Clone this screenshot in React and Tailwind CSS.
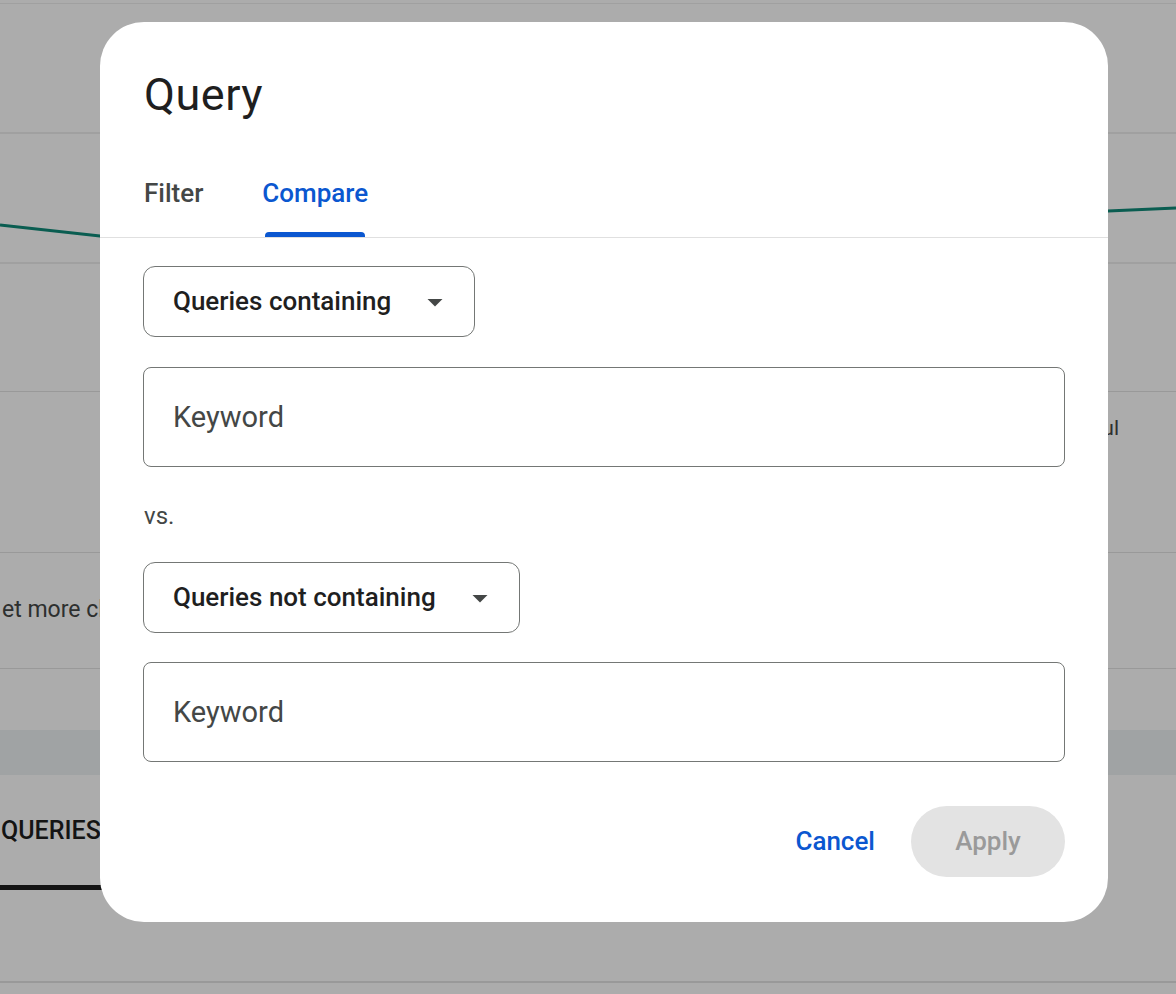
import { useState } from "react";

function Caret() {
  return (
    <svg viewBox="0 0 24 24" className="h-[36px] w-[36px] shrink-0 fill-[#444746]">
      <path d="M7 10l5 5 5-5z" />
    </svg>
  );
}

function SelectField({ label }) {
  return (
    <button className="flex h-[71px] w-fit items-center gap-[26px] rounded-[12px] border border-[#747775] pl-[29px] pr-[21px] text-[26px] font-medium text-[#1f1f1f]">
      <span>{label}</span>
      <Caret />
    </button>
  );
}

function KeywordInput() {
  return (
    <input
      placeholder="Keyword"
      className="h-[100px] w-full rounded-[8px] border border-[#747775] px-[29px] text-[29px] text-[#1f1f1f] outline-none placeholder:text-[#444746]"
    />
  );
}

function PageBehind() {
  return (
    <div className="flex flex-col text-[#444746]">
      <div className="h-[4px] border-b border-[#eeeeee]" />
      {/* performance chart */}
      <div className="h-[387px]">
        <svg viewBox="0 0 1176 387" preserveAspectRatio="none" className="h-full w-full">
          <line x1="0" y1="129" x2="1176" y2="129" stroke="#eeeeee" strokeWidth="2" />
          <line x1="0" y1="259" x2="1176" y2="259" stroke="#eeeeee" strokeWidth="2" />
          <polyline
            points="0,221 100,232 300,244 500,229 700,239 900,219 1108,207 1176,204"
            fill="none"
            stroke="#0f8a78"
            strokeWidth="3"
          />
        </svg>
      </div>
      <div className="flex h-[161px] justify-end border-t border-[#e3e3e3] pr-[57px] pt-[21px] text-[21px]">
        Helpful
      </div>
      <div className="flex h-[116px] items-center border-t border-[#e3e3e3] pl-[2px] text-[23px]">
        <span className="whitespace-nowrap">et more clicks</span>
      </div>
      <div className="h-[62px] border-t border-[#e3e3e3]" />
      <div className="h-[45px] bg-[#eef2f4]" />
      <div className="flex h-[115px] items-end">
        <div className="flex w-[112px] flex-col">
          <span className="pl-[1px] text-[25px] font-medium text-[#1f1f1f]">QUERIES</span>
          <div className="mt-[36px] h-[5px] bg-[#1f1f1f]" />
        </div>
      </div>
      <div className="h-[93px] border-b-2 border-[#e3e3e3]" />
    </div>
  );
}

export default function App() {
  const [tab, setTab] = useState("compare");

  return (
    <div className="relative h-[994px] w-[1176px] overflow-hidden bg-white font-['Roboto',sans-serif]">
      <PageBehind />
      <div className="absolute inset-0 bg-black/[0.325]" />

      <div className="absolute left-[100px] top-[22px] flex h-[900px] w-[1008px] flex-col rounded-[44px] bg-white">
        <h2 className="px-[44px] pt-[47px] text-[45px] leading-[52px] tracking-[0.5px] text-[#1f1f1f]">Query</h2>

        <div className="mt-[56px] flex gap-[59px] border-b border-[#e0e0e0] px-[44px]">
          {[
            ["filter", "Filter"],
            ["compare", "Compare"],
          ].map(([key, label]) => (
            <button key={key} onClick={() => setTab(key)} className="flex flex-col">
              <span
                className={`text-[26px] font-medium leading-[32px] ${
                  tab === key ? "text-[#0b57d0]" : "text-[#444746]"
                }`}
              >
                {label}
              </span>
              <span
                className={`mx-[3px] mt-[23px] h-[5px] rounded-t-[4px] ${
                  tab === key ? "bg-[#0b57d0]" : "bg-transparent"
                }`}
              />
            </button>
          ))}
        </div>

        <div className="flex flex-col px-[43px]">
          <div className="mt-[28px]">
            <SelectField label="Queries containing" />
          </div>
          <div className="mt-[30px]">
            <KeywordInput />
          </div>
          <p className="mt-[33px] pl-[1px] text-[24px] leading-[32px] text-[#444746]">vs.</p>
          <div className="mt-[30px]">
            <SelectField label="Queries not containing" />
          </div>
          <div className="mt-[29px]">
            <KeywordInput />
          </div>

          <div className="mt-[44px] flex items-center justify-end gap-[16px] pb-[45px]">
            <button className="h-[71px] px-[20px] text-[26px] font-medium text-[#0b57d0]">Cancel</button>
            <button
              disabled
              className="flex h-[71px] w-[154px] items-center justify-center rounded-full bg-[#e3e3e3] text-[26px] font-medium text-[#9a9a9a]"
            >
              Apply
            </button>
          </div>
        </div>
      </div>
    </div>
  );
}
